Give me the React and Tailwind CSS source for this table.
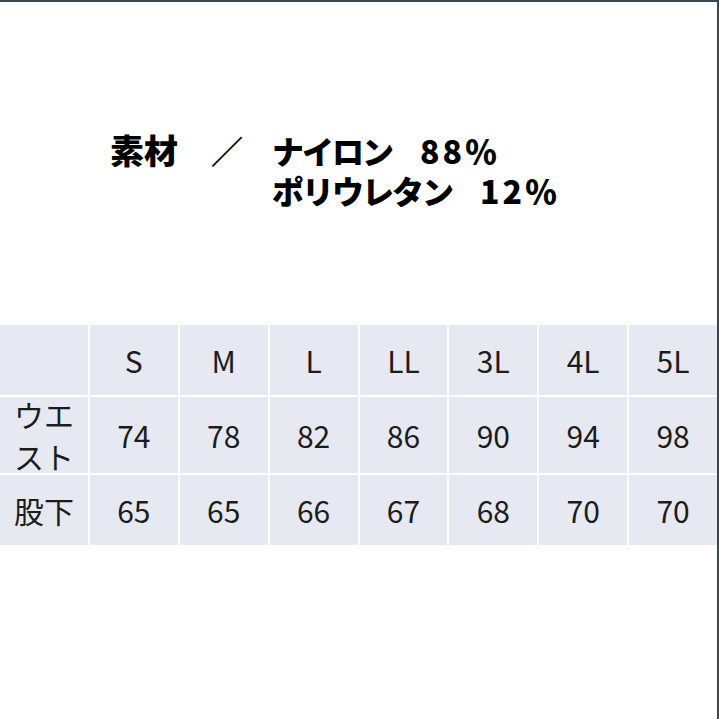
const sizes = ['S', 'M', 'L', 'LL', '3L', '4L', '5L']
const waist = ['74', '78', '82', '86', '90', '94', '98']
const inseam = ['65', '65', '66', '67', '68', '70', '70']

function Cell({ children }) {
  return (
    <div className="bg-[#e6e9f2] flex items-center justify-center text-center text-[30px] font-normal text-[#1c1c1c] leading-[42px]">
      {children}
    </div>
  )
}

export default function App() {
  return (
    <div
      className="w-[719px] h-[719px] bg-white border-t-2 border-r-2 border-[#3b4852] overflow-hidden"
      style={{ fontFamily: '"Noto Sans CJK JP", "Noto Sans", sans-serif' }}
    >
      <div className="mt-[128px] pl-[110px] flex text-[32px] font-black text-black leading-[40px]">
        <span className="w-[101px] text-[34px]">素材</span>
        <span className="w-[61px]">／</span>
        <div className="flex flex-col">
          <div className="flex">
            <span className="w-[148px] tracking-[-2px]">ナイロン</span>
            <span className="tracking-[3px]">88％</span>
          </div>
          <div className="flex">
            <span className="w-[208px] tracking-[-2px]">ポリウレタン</span>
            <span className="tracking-[3px]">12％</span>
          </div>
        </div>
      </div>

      <div className="mt-[115px] w-[717px] grid grid-cols-8 grid-rows-[70px_76px_70px] gap-[2px]">
        <Cell />
        {sizes.map((s, i) => <Cell key={'s' + i}>{s}</Cell>)}
        <Cell>ウエ<br />スト</Cell>
        {waist.map((v, i) => <Cell key={'w' + i}>{v}</Cell>)}
        <Cell>股下</Cell>
        {inseam.map((v, i) => <Cell key={'i' + i}>{v}</Cell>)}
      </div>
    </div>
  )
}
